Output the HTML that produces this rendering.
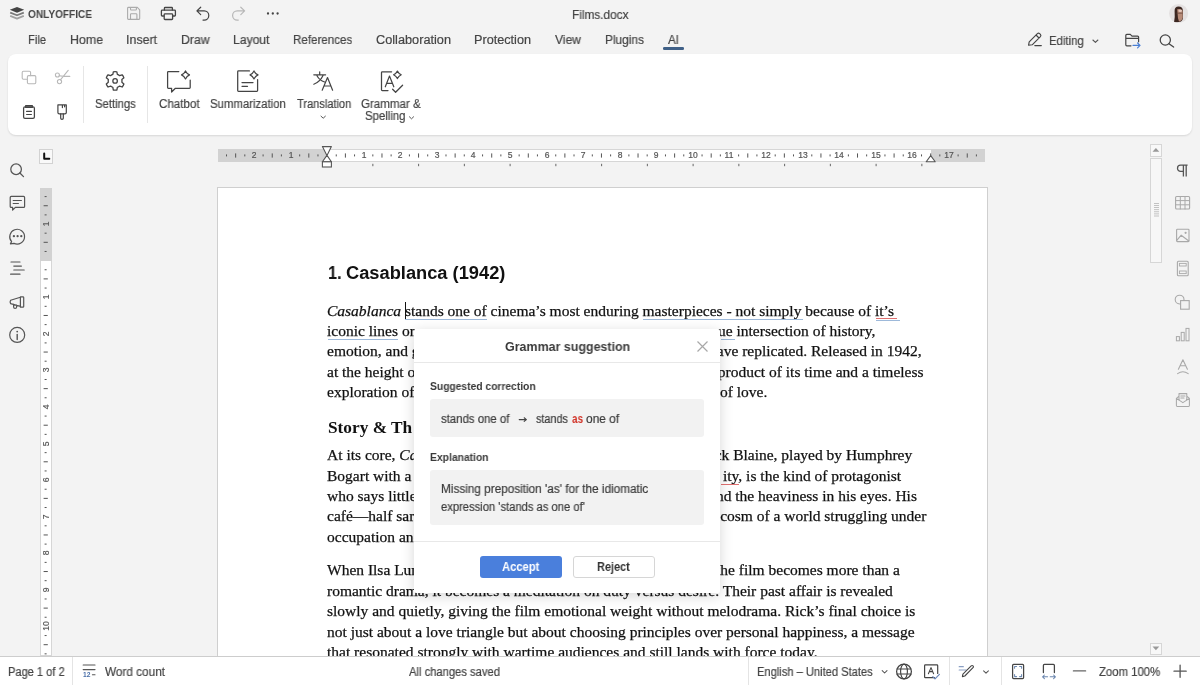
<!DOCTYPE html><html><head><meta charset="utf-8"><style>
html,body{margin:0;padding:0;}
body{width:1200px;height:685px;overflow:hidden;position:relative;background:#f3f3f3;font-family:"Liberation Sans",sans-serif;}
.t{position:absolute;white-space:pre;}
body{-webkit-font-smoothing:antialiased;}
.t{will-change:transform;}
.t.s{-webkit-text-stroke:0.2px currentColor;}
.a{position:absolute;}

.panel{position:absolute;left:8px;top:54px;width:1184px;height:81px;background:#fff;border-radius:8px;box-shadow:0 1px 2px rgba(0,0,0,.12);}
.page{position:absolute;left:217px;top:187px;width:769px;height:520px;background:#fff;border:1px solid #cfcfcf;}
.status{position:absolute;left:0;top:656px;width:1200px;height:29px;background:#fff;border-top:1px solid #cdcdcd;}
.dlg{position:absolute;left:414px;top:329.3px;width:306px;height:264.2px;background:#fff;border-radius:2px;box-shadow:0 3px 14px rgba(0,0,0,.16);}
</style></head><body>
<div class="t" id="t0" style="left:28.00px;transform-origin:0 0;top:8.61px;font-family:'Liberation Sans', sans-serif;font-size:10.5px;line-height:10.5px;font-weight:700;font-style:normal;color:#444;transform:scaleX(0.9595);">ONLYOFFICE</div>
<div class="t s" id="t1" style="left:571.80px;transform-origin:0 0;top:8.62px;font-family:'Liberation Sans', sans-serif;font-size:12.5px;line-height:12.5px;font-weight:400;font-style:normal;color:#444;transform:scaleX(0.9459);">Films.docx</div>
<div class="t s" id="t2" style="left:27.50px;transform-origin:0 0;top:33.92px;font-family:'Liberation Sans', sans-serif;font-size:12.5px;line-height:12.5px;font-weight:400;font-style:normal;color:#444;transform:scaleX(0.8930);">File</div>
<div class="t s" id="t3" style="left:69.50px;transform-origin:0 0;top:33.92px;font-family:'Liberation Sans', sans-serif;font-size:12.5px;line-height:12.5px;font-weight:400;font-style:normal;color:#444;transform:scaleX(0.9897);">Home</div>
<div class="t s" id="t4" style="left:126.00px;transform-origin:0 0;top:33.92px;font-family:'Liberation Sans', sans-serif;font-size:12.5px;line-height:12.5px;font-weight:400;font-style:normal;color:#444;transform:scaleX(0.9915);">Insert</div>
<div class="t s" id="t5" style="left:180.50px;transform-origin:0 0;top:33.92px;font-family:'Liberation Sans', sans-serif;font-size:12.5px;line-height:12.5px;font-weight:400;font-style:normal;color:#444;transform:scaleX(0.9770);">Draw</div>
<div class="t s" id="t6" style="left:232.50px;transform-origin:0 0;top:33.92px;font-family:'Liberation Sans', sans-serif;font-size:12.5px;line-height:12.5px;font-weight:400;font-style:normal;color:#444;transform:scaleX(0.9725);">Layout</div>
<div class="t s" id="t7" style="left:293.30px;transform-origin:0 0;top:33.92px;font-family:'Liberation Sans', sans-serif;font-size:12.5px;line-height:12.5px;font-weight:400;font-style:normal;color:#444;transform:scaleX(0.9259);">References</div>
<div class="t s" id="t8" style="left:376.00px;transform-origin:0 0;top:33.92px;font-family:'Liberation Sans', sans-serif;font-size:12.5px;line-height:12.5px;font-weight:400;font-style:normal;color:#444;transform:scaleX(1.0180);">Collaboration</div>
<div class="t s" id="t9" style="left:474.00px;transform-origin:0 0;top:33.92px;font-family:'Liberation Sans', sans-serif;font-size:12.5px;line-height:12.5px;font-weight:400;font-style:normal;color:#444;transform:scaleX(1.0128);">Protection</div>
<div class="t s" id="t10" style="left:555.00px;transform-origin:0 0;top:33.92px;font-family:'Liberation Sans', sans-serif;font-size:12.5px;line-height:12.5px;font-weight:400;font-style:normal;color:#444;transform:scaleX(0.9674);">View</div>
<div class="t s" id="t11" style="left:605.00px;transform-origin:0 0;top:33.92px;font-family:'Liberation Sans', sans-serif;font-size:12.5px;line-height:12.5px;font-weight:400;font-style:normal;color:#444;transform:scaleX(0.9512);">Plugins</div>
<div class="t s" id="t12" style="left:668.00px;transform-origin:0 0;top:33.92px;font-family:'Liberation Sans', sans-serif;font-size:12.5px;line-height:12.5px;font-weight:400;font-style:normal;color:#444;transform:scaleX(0.9312);">AI</div>
<div class="a" style="left:663px;top:47.3px;width:21px;height:2.7px;background:#3f6087;border-radius:1.3px"></div>
<div class="t s" id="t13" style="left:1048.80px;transform-origin:0 0;top:35.32px;font-family:'Liberation Sans', sans-serif;font-size:12.5px;line-height:12.5px;font-weight:400;font-style:normal;color:#444;transform:scaleX(0.9102);">Editing</div>
<svg class="a" style="left:0;top:0;pointer-events:none" width="1200" height="685" viewBox="0 0 1200 685" fill="none"><path d="M17 6.9 L24.2 9.8 L17 12.7 L9.8 9.8Z" fill="#444"/><path d="M10.2 12.6 L17 15.3 L23.8 12.6" stroke="#7a7a7a" stroke-width="1.7" stroke-linejoin="round"/><path d="M10.2 15.9 L17 18.6 L23.8 15.9" stroke="#a0a0a0" stroke-width="1.7" stroke-linejoin="round"/><path d="M127.6 8.2 Q127.6 7.4 128.4 7.4 H137.3 L139.7 9.8 V18.6 Q139.7 19.4 138.9 19.4 H128.4 Q127.6 19.4 127.6 18.6Z" stroke="#ababab" stroke-width="1.1" stroke-linecap="round" stroke-linejoin="round" /><path d="M130.5 7.6 V9.2 Q130.5 10 131.3 10 H135.6 Q136.4 10 136.4 9.2 V7.6" stroke="#ababab" stroke-width="1.1" stroke-linecap="round" stroke-linejoin="round" /><path d="M130.5 19.2 V14.6 Q130.5 13.8 131.3 13.8 H136.1 Q136.9 13.8 136.9 14.6 V19.2" stroke="#ababab" stroke-width="1.1" stroke-linecap="round" stroke-linejoin="round" /><path d="M164.4 10 V8.2 Q164.4 7.5 165.1 7.5 H171.7 Q172.4 7.5 172.4 8.2 V10" stroke="#444" stroke-width="1.3" stroke-linecap="round" stroke-linejoin="round" /><path d="M163.8 16 H162.2 Q161.4 16 161.4 15.2 V11 Q161.4 10.2 162.2 10.2 H174.6 Q175.4 10.2 175.4 11 V15.2 Q175.4 16 174.6 16 H173" stroke="#444" stroke-width="1.3" stroke-linecap="round" stroke-linejoin="round" /><path d="M164.2 14.6 Q164.2 13.8 165 13.8 H171.8 Q172.6 13.8 172.6 14.6 V18.7 Q172.6 19.5 171.8 19.5 H165 Q164.2 19.5 164.2 18.7Z" stroke="#444" stroke-width="1.3" stroke-linecap="round" stroke-linejoin="round" /><path d="M200.7 7.2 L196.9 10.9 L200.7 14.7 M197.2 10.9 H204.2 A4.6 4.6 0 0 1 204.2 20.1 H203" stroke="#444" stroke-width="1.2" stroke-linecap="round" stroke-linejoin="round" /><path d="M240.8 7.2 L244.6 10.9 L240.8 14.7 M244.3 10.9 H237.2 A4.6 4.6 0 0 0 237.2 20.1 H238.3" stroke="#b8b8b8" stroke-width="1.2" stroke-linecap="round" stroke-linejoin="round" /><circle cx="268" cy="13.5" r="1.15" fill="#444"/><circle cx="272.8" cy="13.5" r="1.15" fill="#444"/><circle cx="277.6" cy="13.5" r="1.15" fill="#444"/><defs><radialGradient id="av" cx="50%" cy="45%" r="55%"><stop offset="0" stop-color="#8a6a5a"/><stop offset="0.5" stop-color="#4a342c"/><stop offset="1" stop-color="#d8d4d2"/></radialGradient><clipPath id="avc"><circle cx="1178.5" cy="13.5" r="9.5"/></clipPath></defs><circle cx="1178.6" cy="13.5" r="9.5" fill="#e4e1e1"/><g clip-path="url(#avc)"><path d="M1174.6 11 Q1174.4 6.6 1178.6 6.5 Q1182.6 6.6 1182.9 10.5 L1183 18 Q1182.4 21.8 1178.6 22 L1174 22.5 Q1175.2 18 1174.6 11Z" fill="#3b2620"/><path d="M1177.2 9.2 Q1180.6 8.4 1182.6 10.6 L1182.8 17.6 Q1182 21.2 1179 21.4 Q1177.6 18 1177.6 14Z" fill="#b78b78"/><ellipse cx="1180.2" cy="10.8" rx="1.8" ry="1.3" fill="#e6c9bd"/><path d="M1176.6 13.2 H1182.6" stroke="#6b4a3e" stroke-width="0.8"/></g><path d="M1028.6 45.2 L1029.2 41.8 L1037.4 33.6 Q1038.5 32.6 1039.6 33.6 L1040.4 34.4 Q1041.4 35.5 1040.4 36.6 L1032.2 44.8 Z M1036 35 L1039 38" stroke="#444" stroke-width="1.15" stroke-linecap="round" stroke-linejoin="round" /><path d="M1034.8 45.6 H1041.3" stroke="#444" stroke-width="1.15" stroke-linecap="round" stroke-linejoin="round" /><path d="M1092.9 40 L1095.4 42.3 L1097.9 40" stroke="#555" stroke-width="1.1" stroke-linecap="round" stroke-linejoin="round" /><path d="M1131 45.8 H1126.8 Q1125.8 45.8 1125.8 44.8 V35.4 Q1125.8 34.4 1126.8 34.4 H1130.3 L1132 36.1 H1137.6 Q1138.6 36.1 1138.6 37.1 V41.8 M1125.8 38.4 H1138.6" stroke="#444" stroke-width="1.2" stroke-linecap="round" stroke-linejoin="round" /><path d="M1133 45.4 H1140 M1137.6 43 L1140 45.4 L1137.6 47.8" stroke="#4a7fd4" stroke-width="1.2" stroke-linecap="round" stroke-linejoin="round" /><circle cx="1165.3" cy="40" r="5.1" stroke="#444" stroke-width="1.25"/><path d="M1169 43.7 L1173.6 47.1" stroke="#444" stroke-width="1.3" stroke-linecap="round" stroke-linejoin="round" /></svg>
<div class="panel"></div>
<div class="a" style="left:83px;top:66px;width:1px;height:57px;background:#e6e6e6"></div>
<div class="a" style="left:147px;top:66px;width:1px;height:57px;background:#e6e6e6"></div>
<div class="t s" id="t14" style="left:95.20px;transform-origin:0 0;top:98.04px;font-family:'Liberation Sans', sans-serif;font-size:12px;line-height:12px;font-weight:400;font-style:normal;color:#444;transform:scaleX(0.9410);">Settings</div>
<div class="t s" id="t15" style="left:158.90px;transform-origin:0 0;top:98.04px;font-family:'Liberation Sans', sans-serif;font-size:12px;line-height:12px;font-weight:400;font-style:normal;color:#444;transform:scaleX(0.9659);">Chatbot</div>
<div class="t s" id="t16" style="left:210.00px;transform-origin:0 0;top:98.04px;font-family:'Liberation Sans', sans-serif;font-size:12px;line-height:12px;font-weight:400;font-style:normal;color:#444;transform:scaleX(0.9471);">Summarization</div>
<div class="t s" id="t17" style="left:296.50px;transform-origin:0 0;top:98.04px;font-family:'Liberation Sans', sans-serif;font-size:12px;line-height:12px;font-weight:400;font-style:normal;color:#444;transform:scaleX(0.9199);">Translation</div>
<div class="t s" id="t18" style="left:361.00px;transform-origin:0 0;top:98.04px;font-family:'Liberation Sans', sans-serif;font-size:12px;line-height:12px;font-weight:400;font-style:normal;color:#444;transform:scaleX(0.9627);">Grammar &amp;</div>
<div class="t s" id="t19" style="left:365.00px;transform-origin:0 0;top:110.04px;font-family:'Liberation Sans', sans-serif;font-size:12px;line-height:12px;font-weight:400;font-style:normal;color:#444;transform:scaleX(0.9484);">Spelling</div>
<svg class="a" style="left:0;top:0;pointer-events:none" width="1200" height="685" viewBox="0 0 1200 685" fill="none"><path d="M26.6 79.2 H23.4 Q22.2 79.2 22.2 78 V72.4 Q22.2 71.2 23.4 71.2 H29.4 Q30.6 71.2 30.6 72.4 V75.6" stroke="#b8b8b8" stroke-width="1.1" stroke-linecap="round" stroke-linejoin="round" /><path d="M28.6 75.6 H34.6 Q35.8 75.6 35.8 76.8 V82.6 Q35.8 83.8 34.6 83.8 H28.6 Q27.4 83.8 27.4 82.6 V76.8 Q27.4 75.6 28.6 75.6Z" stroke="#b8b8b8" stroke-width="1.1" stroke-linecap="round" stroke-linejoin="round" /><circle cx="57.4" cy="75" r="2" stroke="#b8b8b8" stroke-width="1.1"/><circle cx="59.5" cy="81.6" r="2.1" stroke="#b8b8b8" stroke-width="1.1"/><path d="M60.4 79.8 L68.2 70.4 M59.3 75.8 L63.8 76.4 H69.8" stroke="#b8b8b8" stroke-width="1.1" stroke-linecap="round" stroke-linejoin="round" /><path d="M25 106.8 H33 Q34.4 106.8 34.4 108.2 V117 Q34.4 118.4 33 118.4 H25 Q23.6 118.4 23.6 117 V108.2 Q23.6 106.8 25 106.8Z" stroke="#444" stroke-width="1.25" stroke-linecap="round" stroke-linejoin="round" /><path d="M25.6 105.6 H32.4 V107.4 H25.6Z" stroke="#444" stroke-width="1.1" stroke-linecap="round" stroke-linejoin="round" /><path d="M26.6 111.4 H31.4 M26.6 114.5 H31.4" stroke="#444" stroke-width="1.2" stroke-linecap="round" stroke-linejoin="round" /><path d="M57.9 104.9 H66.3 V112.4 Q66.3 113.8 64.9 113.8 H59.3 Q57.9 113.8 57.9 112.4Z M62.4 105 V107.6 M64.6 105 V106.8" stroke="#444" stroke-width="1.2" stroke-linecap="round" stroke-linejoin="round" /><path d="M60.7 113.9 V118.3 Q60.7 119.3 62 119.3 Q63.3 119.3 63.3 118.3 V113.9" stroke="#444" stroke-width="1.2" stroke-linecap="round" stroke-linejoin="round" /><path d="M112.85 74.38 L113.33 71.77 A9.3 9.3 0 0 1 116.87 71.77 L117.35 74.38 A6.9 6.9 0 0 1 119.63 75.69 A6.9 6.9 0 0 1 119.63 75.69 L122.12 74.80 A9.3 9.3 0 0 1 123.89 77.87 L121.87 79.58 A6.9 6.9 0 0 1 121.87 82.22 A6.9 6.9 0 0 1 121.87 82.22 L123.89 83.93 A9.3 9.3 0 0 1 122.12 87.00 L119.63 86.11 A6.9 6.9 0 0 1 117.35 87.42 A6.9 6.9 0 0 1 117.35 87.42 L116.87 90.03 A9.3 9.3 0 0 1 113.33 90.03 L112.85 87.42 A6.9 6.9 0 0 1 110.57 86.11 A6.9 6.9 0 0 1 110.57 86.11 L108.08 87.00 A9.3 9.3 0 0 1 106.31 83.93 L108.33 82.22 A6.9 6.9 0 0 1 108.33 79.58 A6.9 6.9 0 0 1 108.33 79.58 L106.31 77.87 A9.3 9.3 0 0 1 108.08 74.80 L110.57 75.69 A6.9 6.9 0 0 1 112.85 74.38 Z" stroke="#444" stroke-width="1.3" stroke-linecap="round" stroke-linejoin="round" /><circle cx="115.1" cy="80.9" r="2.25" stroke="#444" stroke-width="1.3"/><path d="M178.8 71.5 H168.4 Q167.6 71.5 167.6 72.3 V87.5 Q167.6 88.3 168.4 88.3 H171.6 V92 L175.4 88.3 H189.4 Q190.2 88.3 190.2 87.5 V80" stroke="#444" stroke-width="1.25" stroke-linecap="round" stroke-linejoin="round" /><path d="M185.5 70.9 Q186.78 73.62 189.5 74.9 Q186.78 76.18 185.5 78.9 Q184.22 76.18 181.5 74.9 Q184.22 73.62 185.5 70.9Z" stroke="#444" stroke-width="1.2" stroke-linecap="round" stroke-linejoin="round" /><path d="M249.4 70.9 H238.5 Q237.7 70.9 237.7 71.7 V90.5 Q237.7 91.3 238.5 91.3 H256.8 Q257.6 91.3 257.6 90.5 V79.6" stroke="#444" stroke-width="1.25" stroke-linecap="round" stroke-linejoin="round" /><path d="M242 82.5 H253 M242 86.3 H247.5" stroke="#444" stroke-width="1.25" stroke-linecap="round" stroke-linejoin="round" /><path d="M254 70.9 Q255.28 73.62 258.0 74.9 Q255.28 76.18 254 78.9 Q252.72 76.18 250.0 74.9 Q252.72 73.62 254 70.9Z" stroke="#444" stroke-width="1.2" stroke-linecap="round" stroke-linejoin="round" /><path d="M313.8 74.8 H325.6 M319.7 71.8 V74.6 M317 75.8 Q319.5 80.5 324.6 82 M323 75.5 Q320.2 81.8 313.8 84.2" stroke="#444" stroke-width="1.2" stroke-linecap="round" stroke-linejoin="round" /><path d="M322.2 90.2 L327.5 77.6 L332.6 90.2 M324 86 H330.8" stroke="#444" stroke-width="1.2" stroke-linecap="round" stroke-linejoin="round" /><path d="M391.6 71.8 H382.3 Q381.5 71.8 381.5 72.6 V89.8 Q381.5 90.6 382.3 90.6 H388" stroke="#444" stroke-width="1.25" stroke-linecap="round" stroke-linejoin="round" /><path d="M385.3 86.8 L389.5 76 L393.8 86.8 M386.6 83.4 H392.4" stroke="#444" stroke-width="1.2" stroke-linecap="round" stroke-linejoin="round" /><path d="M392.6 89.2 L395.6 92.3 L402.6 85.2" stroke="#444" stroke-width="1.25" stroke-linecap="round" stroke-linejoin="round" /><path d="M397.4 71.0 Q398.616 73.584 401.2 74.8 Q398.616 76.01599999999999 397.4 78.6 Q396.18399999999997 76.01599999999999 393.59999999999997 74.8 Q396.18399999999997 73.584 397.4 71.0Z" stroke="#444" stroke-width="1.2" stroke-linecap="round" stroke-linejoin="round" /><path d="M321 116.2 L323.2 118.2 L325.4 116.2" stroke="#555" stroke-width="1.0" stroke-linecap="round" stroke-linejoin="round" /><path d="M409.4 116.8 L411.5 118.8 L413.6 116.8" stroke="#555" stroke-width="1.0" stroke-linecap="round" stroke-linejoin="round" /></svg>
<div class="a" style="left:218px;top:149px;width:767px;height:13px;background:#fff;box-shadow:inset 0 0 0 1px #d6d6d6"></div>
<div class="a" style="left:218px;top:149px;width:109px;height:13px;background:#d2d2d2;"></div>
<div class="a" style="left:930.7px;top:149px;width:54.3px;height:13px;background:#d2d2d2;"></div>
<div class="a" style="left:40px;top:188px;width:11.5px;height:468px;background:#fff;box-shadow:inset 0 0 0 1px #d6d6d6"></div>
<div class="a" style="left:40px;top:188px;width:11.5px;height:72.6px;background:#d2d2d2;"></div>
<div class="a" style="left:39px;top:149px;width:14px;height:14.5px;background:#f9f9f9;border:1px solid #d2d2d2;box-sizing:border-box"></div>
<svg class="a" style="left:0;top:0;pointer-events:none" width="1200" height="685" viewBox="0 0 1200 685" fill="none"><path d="M44.2 153.6 V158.7 H49.3" stroke="#111" stroke-width="2.0" stroke-linecap="round" stroke-linejoin="round" stroke-linecap="butt" stroke-linejoin="miter"/></svg>
<svg class="a" style="left:0;top:0;pointer-events:none" width="1200" height="685" viewBox="0 0 1200 685" fill="none"><rect x="226.01" y="154.4" width="1" height="2" fill="#555"/><rect x="235.15" y="153.4" width="1" height="4.2" fill="#555"/><rect x="244.30" y="154.4" width="1" height="2" fill="#555"/><rect x="262.59" y="154.4" width="1" height="2" fill="#555"/><rect x="271.73" y="153.4" width="1" height="4.2" fill="#555"/><rect x="280.88" y="154.4" width="1" height="2" fill="#555"/><rect x="299.17" y="154.4" width="1" height="2" fill="#555"/><rect x="308.31" y="153.4" width="1" height="4.2" fill="#555"/><rect x="317.46" y="154.4" width="1" height="2" fill="#555"/><rect x="335.75" y="154.4" width="1" height="2" fill="#555"/><rect x="344.89" y="153.4" width="1" height="4.2" fill="#555"/><rect x="354.04" y="154.4" width="1" height="2" fill="#555"/><rect x="372.33" y="154.4" width="1" height="2" fill="#555"/><rect x="381.47" y="153.4" width="1" height="4.2" fill="#555"/><rect x="390.62" y="154.4" width="1" height="2" fill="#555"/><rect x="408.91" y="154.4" width="1" height="2" fill="#555"/><rect x="418.05" y="153.4" width="1" height="4.2" fill="#555"/><rect x="427.20" y="154.4" width="1" height="2" fill="#555"/><rect x="445.49" y="154.4" width="1" height="2" fill="#555"/><rect x="454.63" y="153.4" width="1" height="4.2" fill="#555"/><rect x="463.77" y="154.4" width="1" height="2" fill="#555"/><rect x="482.07" y="154.4" width="1" height="2" fill="#555"/><rect x="491.21" y="153.4" width="1" height="4.2" fill="#555"/><rect x="500.36" y="154.4" width="1" height="2" fill="#555"/><rect x="518.64" y="154.4" width="1" height="2" fill="#555"/><rect x="527.79" y="153.4" width="1" height="4.2" fill="#555"/><rect x="536.93" y="154.4" width="1" height="2" fill="#555"/><rect x="555.23" y="154.4" width="1" height="2" fill="#555"/><rect x="564.37" y="153.4" width="1" height="4.2" fill="#555"/><rect x="573.51" y="154.4" width="1" height="2" fill="#555"/><rect x="591.81" y="154.4" width="1" height="2" fill="#555"/><rect x="600.95" y="153.4" width="1" height="4.2" fill="#555"/><rect x="610.10" y="154.4" width="1" height="2" fill="#555"/><rect x="628.38" y="154.4" width="1" height="2" fill="#555"/><rect x="637.53" y="153.4" width="1" height="4.2" fill="#555"/><rect x="646.67" y="154.4" width="1" height="2" fill="#555"/><rect x="664.97" y="154.4" width="1" height="2" fill="#555"/><rect x="674.11" y="153.4" width="1" height="4.2" fill="#555"/><rect x="683.25" y="154.4" width="1" height="2" fill="#555"/><rect x="701.55" y="154.4" width="1" height="2" fill="#555"/><rect x="710.69" y="153.4" width="1" height="4.2" fill="#555"/><rect x="719.84" y="154.4" width="1" height="2" fill="#555"/><rect x="738.12" y="154.4" width="1" height="2" fill="#555"/><rect x="747.27" y="153.4" width="1" height="4.2" fill="#555"/><rect x="756.41" y="154.4" width="1" height="2" fill="#555"/><rect x="774.70" y="154.4" width="1" height="2" fill="#555"/><rect x="783.85" y="153.4" width="1" height="4.2" fill="#555"/><rect x="793.00" y="154.4" width="1" height="2" fill="#555"/><rect x="811.29" y="154.4" width="1" height="2" fill="#555"/><rect x="820.43" y="153.4" width="1" height="4.2" fill="#555"/><rect x="829.58" y="154.4" width="1" height="2" fill="#555"/><rect x="847.87" y="154.4" width="1" height="2" fill="#555"/><rect x="857.01" y="153.4" width="1" height="4.2" fill="#555"/><rect x="866.15" y="154.4" width="1" height="2" fill="#555"/><rect x="884.45" y="154.4" width="1" height="2" fill="#555"/><rect x="893.59" y="153.4" width="1" height="4.2" fill="#555"/><rect x="902.74" y="154.4" width="1" height="2" fill="#555"/><rect x="921.02" y="154.4" width="1" height="2" fill="#555"/><rect x="930.17" y="153.4" width="1" height="4.2" fill="#555"/><rect x="939.31" y="154.4" width="1" height="2" fill="#555"/><rect x="957.61" y="154.4" width="1" height="2" fill="#555"/><rect x="966.75" y="153.4" width="1" height="4.2" fill="#555"/><rect x="975.89" y="154.4" width="1" height="2" fill="#555"/><rect x="372.35" y="163.8" width="1" height="2.4" fill="#666"/><rect x="418.10" y="163.8" width="1" height="2.4" fill="#666"/><rect x="463.85" y="163.8" width="1" height="2.4" fill="#666"/><rect x="509.60" y="163.8" width="1" height="2.4" fill="#666"/><rect x="555.35" y="163.8" width="1" height="2.4" fill="#666"/><rect x="601.10" y="163.8" width="1" height="2.4" fill="#666"/><rect x="646.85" y="163.8" width="1" height="2.4" fill="#666"/><rect x="692.60" y="163.8" width="1" height="2.4" fill="#666"/><rect x="738.35" y="163.8" width="1" height="2.4" fill="#666"/><rect x="784.10" y="163.8" width="1" height="2.4" fill="#666"/><rect x="829.85" y="163.8" width="1" height="2.4" fill="#666"/><rect x="875.60" y="163.8" width="1" height="2.4" fill="#666"/><rect x="921.35" y="163.8" width="1" height="2.4" fill="#666"/><rect x="44.6" y="196.09" width="2" height="1" fill="#555"/><rect x="43.6" y="205.23" width="4.2" height="1" fill="#555"/><rect x="44.6" y="214.38" width="2" height="1" fill="#555"/><rect x="44.6" y="232.67" width="2" height="1" fill="#555"/><rect x="43.6" y="241.81" width="4.2" height="1" fill="#555"/><rect x="44.6" y="250.96" width="2" height="1" fill="#555"/><rect x="44.6" y="269.25" width="2" height="1" fill="#555"/><rect x="43.6" y="278.39" width="4.2" height="1" fill="#555"/><rect x="44.6" y="287.54" width="2" height="1" fill="#555"/><rect x="44.6" y="305.83" width="2" height="1" fill="#555"/><rect x="43.6" y="314.97" width="4.2" height="1" fill="#555"/><rect x="44.6" y="324.12" width="2" height="1" fill="#555"/><rect x="44.6" y="342.41" width="2" height="1" fill="#555"/><rect x="43.6" y="351.55" width="4.2" height="1" fill="#555"/><rect x="44.6" y="360.70" width="2" height="1" fill="#555"/><rect x="44.6" y="378.99" width="2" height="1" fill="#555"/><rect x="43.6" y="388.13" width="4.2" height="1" fill="#555"/><rect x="44.6" y="397.27" width="2" height="1" fill="#555"/><rect x="44.6" y="415.57" width="2" height="1" fill="#555"/><rect x="43.6" y="424.71" width="4.2" height="1" fill="#555"/><rect x="44.6" y="433.86" width="2" height="1" fill="#555"/><rect x="44.6" y="452.14" width="2" height="1" fill="#555"/><rect x="43.6" y="461.29" width="4.2" height="1" fill="#555"/><rect x="44.6" y="470.44" width="2" height="1" fill="#555"/><rect x="44.6" y="488.73" width="2" height="1" fill="#555"/><rect x="43.6" y="497.87" width="4.2" height="1" fill="#555"/><rect x="44.6" y="507.01" width="2" height="1" fill="#555"/><rect x="44.6" y="525.31" width="2" height="1" fill="#555"/><rect x="43.6" y="534.45" width="4.2" height="1" fill="#555"/><rect x="44.6" y="543.60" width="2" height="1" fill="#555"/><rect x="44.6" y="561.88" width="2" height="1" fill="#555"/><rect x="43.6" y="571.03" width="4.2" height="1" fill="#555"/><rect x="44.6" y="580.17" width="2" height="1" fill="#555"/><rect x="44.6" y="598.47" width="2" height="1" fill="#555"/><rect x="43.6" y="607.61" width="4.2" height="1" fill="#555"/><rect x="44.6" y="616.75" width="2" height="1" fill="#555"/><rect x="44.6" y="635.05" width="2" height="1" fill="#555"/><rect x="43.6" y="644.19" width="4.2" height="1" fill="#555"/><rect x="44.6" y="653.34" width="2" height="1" fill="#555"/><path d="M322.4 146.6 H331.4 L327 155.4 L331.4 161.8 H322.4 L326.9 155.4Z" stroke="#555" stroke-width="1.1" stroke-linecap="round" stroke-linejoin="round" fill="#fff"/><rect x="322.4" y="161.8" width="9" height="5.2" fill="#fff" stroke="#555" stroke-width="1.1"/><path d="M930.7 155.6 L935.2 161.8 H926.2Z" stroke="#555" stroke-width="1.1" stroke-linecap="round" stroke-linejoin="round" fill="#fff"/></svg>
<div class="t s" id="t20" style="left:253.94px;transform-origin:0 0;top:151.20px;font-family:'Liberation Sans', sans-serif;font-size:8.5px;line-height:8.5px;font-weight:400;font-style:normal;color:#555;transform:translateX(-50%);">2</div>
<div class="t s" id="t21" style="left:290.52px;transform-origin:0 0;top:151.20px;font-family:'Liberation Sans', sans-serif;font-size:8.5px;line-height:8.5px;font-weight:400;font-style:normal;color:#555;transform:translateX(-50%);">1</div>
<div class="t s" id="t22" style="left:363.68px;transform-origin:0 0;top:151.20px;font-family:'Liberation Sans', sans-serif;font-size:8.5px;line-height:8.5px;font-weight:400;font-style:normal;color:#555;transform:translateX(-50%);">1</div>
<div class="t s" id="t23" style="left:400.26px;transform-origin:0 0;top:151.20px;font-family:'Liberation Sans', sans-serif;font-size:8.5px;line-height:8.5px;font-weight:400;font-style:normal;color:#555;transform:translateX(-50%);">2</div>
<div class="t s" id="t24" style="left:436.84px;transform-origin:0 0;top:151.20px;font-family:'Liberation Sans', sans-serif;font-size:8.5px;line-height:8.5px;font-weight:400;font-style:normal;color:#555;transform:translateX(-50%);">3</div>
<div class="t s" id="t25" style="left:473.42px;transform-origin:0 0;top:151.20px;font-family:'Liberation Sans', sans-serif;font-size:8.5px;line-height:8.5px;font-weight:400;font-style:normal;color:#555;transform:translateX(-50%);">4</div>
<div class="t s" id="t26" style="left:510.00px;transform-origin:0 0;top:151.20px;font-family:'Liberation Sans', sans-serif;font-size:8.5px;line-height:8.5px;font-weight:400;font-style:normal;color:#555;transform:translateX(-50%);">5</div>
<div class="t s" id="t27" style="left:546.58px;transform-origin:0 0;top:151.20px;font-family:'Liberation Sans', sans-serif;font-size:8.5px;line-height:8.5px;font-weight:400;font-style:normal;color:#555;transform:translateX(-50%);">6</div>
<div class="t s" id="t28" style="left:583.16px;transform-origin:0 0;top:151.20px;font-family:'Liberation Sans', sans-serif;font-size:8.5px;line-height:8.5px;font-weight:400;font-style:normal;color:#555;transform:translateX(-50%);">7</div>
<div class="t s" id="t29" style="left:619.74px;transform-origin:0 0;top:151.20px;font-family:'Liberation Sans', sans-serif;font-size:8.5px;line-height:8.5px;font-weight:400;font-style:normal;color:#555;transform:translateX(-50%);">8</div>
<div class="t s" id="t30" style="left:656.32px;transform-origin:0 0;top:151.20px;font-family:'Liberation Sans', sans-serif;font-size:8.5px;line-height:8.5px;font-weight:400;font-style:normal;color:#555;transform:translateX(-50%);">9</div>
<div class="t s" id="t31" style="left:692.90px;transform-origin:0 0;top:151.20px;font-family:'Liberation Sans', sans-serif;font-size:8.5px;line-height:8.5px;font-weight:400;font-style:normal;color:#555;transform:translateX(-50%);">10</div>
<div class="t s" id="t32" style="left:729.48px;transform-origin:0 0;top:151.20px;font-family:'Liberation Sans', sans-serif;font-size:8.5px;line-height:8.5px;font-weight:400;font-style:normal;color:#555;transform:translateX(-50%);">11</div>
<div class="t s" id="t33" style="left:766.06px;transform-origin:0 0;top:151.20px;font-family:'Liberation Sans', sans-serif;font-size:8.5px;line-height:8.5px;font-weight:400;font-style:normal;color:#555;transform:translateX(-50%);">12</div>
<div class="t s" id="t34" style="left:802.64px;transform-origin:0 0;top:151.20px;font-family:'Liberation Sans', sans-serif;font-size:8.5px;line-height:8.5px;font-weight:400;font-style:normal;color:#555;transform:translateX(-50%);">13</div>
<div class="t s" id="t35" style="left:839.22px;transform-origin:0 0;top:151.20px;font-family:'Liberation Sans', sans-serif;font-size:8.5px;line-height:8.5px;font-weight:400;font-style:normal;color:#555;transform:translateX(-50%);">14</div>
<div class="t s" id="t36" style="left:875.80px;transform-origin:0 0;top:151.20px;font-family:'Liberation Sans', sans-serif;font-size:8.5px;line-height:8.5px;font-weight:400;font-style:normal;color:#555;transform:translateX(-50%);">15</div>
<div class="t s" id="t37" style="left:912.38px;transform-origin:0 0;top:151.20px;font-family:'Liberation Sans', sans-serif;font-size:8.5px;line-height:8.5px;font-weight:400;font-style:normal;color:#555;transform:translateX(-50%);">16</div>
<div class="t s" id="t38" style="left:948.96px;transform-origin:0 0;top:151.20px;font-family:'Liberation Sans', sans-serif;font-size:8.5px;line-height:8.5px;font-weight:400;font-style:normal;color:#555;transform:translateX(-50%);">17</div>
<div class="t" style="left:41px;top:219.02px;width:10px;height:10px;font-size:8.5px;line-height:10px;text-align:center;color:#555;transform:rotate(-90deg);will-change:transform;-webkit-text-stroke:0.2px #555">1</div>
<div class="t" style="left:41px;top:292.18px;width:10px;height:10px;font-size:8.5px;line-height:10px;text-align:center;color:#555;transform:rotate(-90deg);will-change:transform;-webkit-text-stroke:0.2px #555">1</div>
<div class="t" style="left:41px;top:328.76px;width:10px;height:10px;font-size:8.5px;line-height:10px;text-align:center;color:#555;transform:rotate(-90deg);will-change:transform;-webkit-text-stroke:0.2px #555">2</div>
<div class="t" style="left:41px;top:365.34px;width:10px;height:10px;font-size:8.5px;line-height:10px;text-align:center;color:#555;transform:rotate(-90deg);will-change:transform;-webkit-text-stroke:0.2px #555">3</div>
<div class="t" style="left:41px;top:401.92px;width:10px;height:10px;font-size:8.5px;line-height:10px;text-align:center;color:#555;transform:rotate(-90deg);will-change:transform;-webkit-text-stroke:0.2px #555">4</div>
<div class="t" style="left:41px;top:438.50px;width:10px;height:10px;font-size:8.5px;line-height:10px;text-align:center;color:#555;transform:rotate(-90deg);will-change:transform;-webkit-text-stroke:0.2px #555">5</div>
<div class="t" style="left:41px;top:475.08px;width:10px;height:10px;font-size:8.5px;line-height:10px;text-align:center;color:#555;transform:rotate(-90deg);will-change:transform;-webkit-text-stroke:0.2px #555">6</div>
<div class="t" style="left:41px;top:511.66px;width:10px;height:10px;font-size:8.5px;line-height:10px;text-align:center;color:#555;transform:rotate(-90deg);will-change:transform;-webkit-text-stroke:0.2px #555">7</div>
<div class="t" style="left:41px;top:548.24px;width:10px;height:10px;font-size:8.5px;line-height:10px;text-align:center;color:#555;transform:rotate(-90deg);will-change:transform;-webkit-text-stroke:0.2px #555">8</div>
<div class="t" style="left:41px;top:584.82px;width:10px;height:10px;font-size:8.5px;line-height:10px;text-align:center;color:#555;transform:rotate(-90deg);will-change:transform;-webkit-text-stroke:0.2px #555">9</div>
<div class="t" style="left:41px;top:621.40px;width:10px;height:10px;font-size:8.5px;line-height:10px;text-align:center;color:#555;transform:rotate(-90deg);will-change:transform;-webkit-text-stroke:0.2px #555">10</div>
<svg class="a" style="left:0;top:0;pointer-events:none" width="1200" height="685" viewBox="0 0 1200 685" fill="none"><circle cx="16.1" cy="169.2" r="5.3" stroke="#555" stroke-width="1.25"/><path d="M19.9 173 L23.5 176.6" stroke="#555" stroke-width="1.3" stroke-linecap="round" stroke-linejoin="round" /><path d="M11.2 196.4 H23.6 Q24.6 196.4 24.6 197.4 V206.4 Q24.6 207.4 23.6 207.4 H15.4 L12.6 210 V207.4 H11.2 Q10.2 207.4 10.2 206.4 V197.4 Q10.2 196.4 11.2 196.4Z" stroke="#555" stroke-width="1.2" stroke-linecap="round" stroke-linejoin="round" /><path d="M13.2 200.5 H21.4 M13.2 203.5 H18.4" stroke="#555" stroke-width="1.2" stroke-linecap="round" stroke-linejoin="round" /><path d="M11.6 241.6 A7.4 7.4 0 1 1 14 243.4 L10.4 243.8 Z" stroke="#555" stroke-width="1.2" stroke-linecap="round" stroke-linejoin="round" /><circle cx="13.9" cy="236.2" r="1.15" fill="#555"/><circle cx="17.6" cy="236.2" r="1.15" fill="#555"/><circle cx="21.3" cy="236.2" r="1.15" fill="#555"/><path d="M11 262 H20 M13.8 266.1 H21.4 M13.8 270 H24.2 M10.6 274.2 H20" stroke="#555" stroke-width="1.2" stroke-linecap="round" stroke-linejoin="round" /><path d="M10.6 300.2 Q9.6 301.9 10.6 303.6 L20.4 306.4 V297.2 Z M20.4 296.8 H22.9 Q23.7 296.8 23.7 297.6 V306.4 Q23.7 307.2 22.9 307.2 H20.4 M13.6 304.4 V307.1 Q13.6 308.5 15.1 308.5 Q16.6 308.5 16.6 307.1 V305.2" stroke="#555" stroke-width="1.2" stroke-linecap="round" stroke-linejoin="round" /><circle cx="17.2" cy="334.9" r="7.5" stroke="#555" stroke-width="1.2"/><circle cx="17.2" cy="331.6" r="0.9" fill="#555"/><path d="M17.2 334.4 V339.6" stroke="#555" stroke-width="1.4" stroke-linecap="round" stroke-linejoin="round" /></svg>
<div class="a" style="left:1150px;top:144px;width:12px;height:13px;background:#f8f8f8;border:1px solid #d6d6d6;box-sizing:border-box"></div>
<div class="a" style="left:1150px;top:158px;width:12px;height:104.5px;background:#f7f7f7;border:1px solid #d6d6d6;box-sizing:border-box"></div>
<div class="a" style="left:1150px;top:642.5px;width:12px;height:12.5px;background:#f8f8f8;border:1px solid #d6d6d6;box-sizing:border-box"></div>
<svg class="a" style="left:0;top:0;pointer-events:none" width="1200" height="685" viewBox="0 0 1200 685" fill="none"><path d="M1152.5 151.8 L1155.9 148 L1159.3 151.8Z" fill="#999"/><path d="M1152.5 646.4 L1155.9 650.2 L1159.3 646.4Z" fill="#999"/><rect x="1154" y="203.0" width="5" height="0.8" fill="#b5b5b5"/><rect x="1154" y="205.1" width="5" height="0.8" fill="#b5b5b5"/><rect x="1154" y="207.2" width="5" height="0.8" fill="#b5b5b5"/><rect x="1154" y="209.3" width="5" height="0.8" fill="#b5b5b5"/><rect x="1154" y="211.4" width="5" height="0.8" fill="#b5b5b5"/><rect x="1154" y="213.5" width="5" height="0.8" fill="#b5b5b5"/><rect x="1154" y="215.6" width="5" height="0.8" fill="#b5b5b5"/><path d="M1183.4 165.2 V176.6 M1186.2 165.2 V176.6 M1187.6 165.2 H1180.6 A3.1 3.1 0 0 0 1180.6 171.4 H1183.4" stroke="#555" stroke-width="1.3"/><rect x="1175.6" y="196.5" width="14" height="12.5" rx="1" stroke="#a9a9a9" stroke-width="1.1"/><path d="M1175.6 200.6 H1189.6 M1175.6 204.8 H1189.6 M1180.3 196.5 V209 M1185 196.5 V209" stroke="#a9a9a9" stroke-width="1.0" stroke-linecap="round" stroke-linejoin="round" /><rect x="1176.6" y="229.2" width="12.4" height="12.4" rx="0.8" stroke="#a9a9a9" stroke-width="1.1"/><path d="M1176.8 240.4 L1181.2 235.2 L1188.8 241" stroke="#a9a9a9" stroke-width="1.1" stroke-linecap="round" stroke-linejoin="round" /><circle cx="1185.6" cy="232.8" r="1.1" fill="#a9a9a9"/><rect x="1177.4" y="261.2" width="10.8" height="14.6" rx="1" stroke="#a9a9a9" stroke-width="1.1"/><rect x="1179.4" y="263.4" width="6.8" height="2.6" stroke="#a9a9a9" stroke-width="0.9"/><rect x="1179.4" y="271" width="6.8" height="2.6" stroke="#a9a9a9" stroke-width="0.9"/><circle cx="1179.6" cy="299.6" r="4.4" stroke="#a9a9a9" stroke-width="1.1"/><rect x="1180.6" y="300.6" width="8.6" height="8.6" fill="#f3f3f3" stroke="#a9a9a9" stroke-width="1.1"/><rect x="1176.4" y="336.6" width="3" height="4.2" stroke="#a9a9a9" stroke-width="1"/><rect x="1181.2" y="332.4" width="3" height="8.4" stroke="#a9a9a9" stroke-width="1"/><rect x="1186" y="328.4" width="3" height="12.4" stroke="#a9a9a9" stroke-width="1"/><path d="M1178.4 369.2 L1182.9 359.8 L1187.4 369.2 M1180 365.8 H1185.8 M1177.6 373.6 Q1182.9 369.8 1188.2 373.6" stroke="#a9a9a9" stroke-width="1.1" stroke-linecap="round" stroke-linejoin="round" /><path d="M1176.4 398.4 V405.6 Q1176.4 406.4 1177.2 406.4 H1188.6 Q1189.4 406.4 1189.4 405.6 V398.4 L1182.9 402.6 Z M1176.4 398.4 L1179 396.2 M1189.4 398.4 L1186.8 396.2 M1179 400.2 V393.6 H1186.8 V400.2 M1180.8 396 H1185 M1180.8 398 H1184" stroke="#a9a9a9" stroke-width="1.05" stroke-linecap="round" stroke-linejoin="round" /></svg>
<div class="page"></div>
<div class="t" id="t39" style="left:328.30px;transform-origin:0 0;top:263.96px;font-family:'Liberation Sans', sans-serif;font-size:18px;line-height:18px;font-weight:700;font-style:normal;color:#111;transform:scaleX(0.9057);">1.</div>
<div class="t" id="t40" style="left:345.60px;transform-origin:0 0;top:263.96px;font-family:'Liberation Sans', sans-serif;font-size:18px;line-height:18px;font-weight:700;font-style:normal;color:#111;transform:scaleX(1.0147);">Casablanca (1942)</div>
<div class="t" id="t41" style="left:327.40px;transform-origin:0 0;top:302.92px;font-family:'Liberation Serif', serif;font-size:15.5px;line-height:15.5px;font-weight:400;font-style:normal;color:#111;-webkit-text-stroke:0.25px #111;"><i>Casablanca</i> stands one of cinema’s most enduring masterpieces - not simply because of it’s</div>
<div class="a" style="left:405px;top:319px;width:82px;height:1px;background:#9db9da"></div>
<div class="a" style="left:643px;top:319px;width:160px;height:1px;background:#9db9da"></div>
<div class="a" style="left:876px;top:320px;width:24px;height:1px;background:#9db9da"></div>
<div class="a" style="left:876px;top:318px;width:21px;height:1px;background:#e07070"></div>
<div class="a" style="left:404.5px;top:302px;width:1px;height:17px;background:#111"></div>
<div class="t" id="t42" style="left:327.10px;transform-origin:0 0;top:323.32px;font-family:'Liberation Serif', serif;font-size:15.5px;line-height:15.5px;font-weight:400;font-style:normal;color:#111;-webkit-text-stroke:0.25px #111;">iconic lines or</div>
<div class="a" style="left:327.5px;top:339px;width:70.5px;height:1px;background:#9db9da"></div>
<div class="t" id="t43" style="right:324.20px;transform-origin:100% 0;top:323.32px;font-family:'Liberation Serif', serif;font-size:15.5px;line-height:15.5px;font-weight:400;font-style:normal;color:#111;-webkit-text-stroke:0.25px #111;">ue intersection of history,</div>
<div class="a" style="left:721px;top:339px;width:13.5px;height:1px;background:#9db9da"></div>
<div class="t" id="t44" style="left:327.10px;transform-origin:0 0;top:343.42px;font-family:'Liberation Serif', serif;font-size:15.5px;line-height:15.5px;font-weight:400;font-style:normal;color:#111;-webkit-text-stroke:0.25px #111;">emotion, and gr</div>
<div class="t" id="t45" style="right:278.20px;transform-origin:100% 0;top:343.42px;font-family:'Liberation Serif', serif;font-size:15.5px;line-height:15.5px;font-weight:400;font-style:normal;color:#111;-webkit-text-stroke:0.25px #111;">have replicated. Released in 1942,</div>
<div class="t" id="t46" style="left:327.10px;transform-origin:0 0;top:363.62px;font-family:'Liberation Serif', serif;font-size:15.5px;line-height:15.5px;font-weight:400;font-style:normal;color:#111;-webkit-text-stroke:0.25px #111;">at the height of</div>
<div class="t" id="t47" style="right:276.30px;transform-origin:100% 0;top:363.62px;font-family:'Liberation Serif', serif;font-size:15.5px;line-height:15.5px;font-weight:400;font-style:normal;color:#111;-webkit-text-stroke:0.25px #111;">a product of its time and a timeless</div>
<div class="t" id="t48" style="left:327.10px;transform-origin:0 0;top:383.82px;font-family:'Liberation Serif', serif;font-size:15.5px;line-height:15.5px;font-weight:400;font-style:normal;color:#111;-webkit-text-stroke:0.25px #111;">exploration of</div>
<div class="t" id="t49" style="right:433.00px;transform-origin:100% 0;top:383.82px;font-family:'Liberation Serif', serif;font-size:15.5px;line-height:15.5px;font-weight:400;font-style:normal;color:#111;-webkit-text-stroke:0.25px #111;">of love.</div>
<div class="t" id="t50" style="left:327.70px;transform-origin:0 0;top:418.51px;font-family:'Liberation Serif', serif;font-size:17.3px;line-height:17.3px;font-weight:700;font-style:normal;color:#111;">Story &amp; Th</div>
<div class="t" id="t51" style="left:327.10px;transform-origin:0 0;top:447.42px;font-family:'Liberation Serif', serif;font-size:15.5px;line-height:15.5px;font-weight:400;font-style:normal;color:#111;-webkit-text-stroke:0.25px #111;">At its core, <i>Casablanca</i></div>
<div class="t" id="t52" style="right:287.80px;transform-origin:100% 0;top:447.42px;font-family:'Liberation Serif', serif;font-size:15.5px;line-height:15.5px;font-weight:400;font-style:normal;color:#111;-webkit-text-stroke:0.25px #111;">Rick Blaine, played by Humphrey</div>
<div class="t" id="t53" style="left:327.10px;transform-origin:0 0;top:467.82px;font-family:'Liberation Serif', serif;font-size:15.5px;line-height:15.5px;font-weight:400;font-style:normal;color:#111;-webkit-text-stroke:0.25px #111;">Bogart with a</div>
<div class="t" id="t54" style="right:299.30px;transform-origin:100% 0;top:467.82px;font-family:'Liberation Serif', serif;font-size:15.5px;line-height:15.5px;font-weight:400;font-style:normal;color:#111;-webkit-text-stroke:0.25px #111;">ity, is the kind of protagonist</div>
<div class="a" style="left:721px;top:484px;width:18px;height:1px;background:#e07070"></div>
<div class="t" id="t55" style="left:327.10px;transform-origin:0 0;top:488.02px;font-family:'Liberation Serif', serif;font-size:15.5px;line-height:15.5px;font-weight:400;font-style:normal;color:#111;-webkit-text-stroke:0.25px #111;">who says little</div>
<div class="t" id="t56" style="right:283.00px;transform-origin:100% 0;top:488.02px;font-family:'Liberation Serif', serif;font-size:15.5px;line-height:15.5px;font-weight:400;font-style:normal;color:#111;-webkit-text-stroke:0.25px #111;">and the heaviness in his eyes. His</div>
<div class="t" id="t57" style="left:327.10px;transform-origin:0 0;top:508.42px;font-family:'Liberation Serif', serif;font-size:15.5px;line-height:15.5px;font-weight:400;font-style:normal;color:#111;-webkit-text-stroke:0.25px #111;">café—half sardonic</div>
<div class="t" id="t58" style="right:273.40px;transform-origin:100% 0;top:508.42px;font-family:'Liberation Serif', serif;font-size:15.5px;line-height:15.5px;font-weight:400;font-style:normal;color:#111;-webkit-text-stroke:0.25px #111;">microcosm of a world struggling under</div>
<div class="t" id="t59" style="left:327.10px;transform-origin:0 0;top:529.22px;font-family:'Liberation Serif', serif;font-size:15.5px;line-height:15.5px;font-weight:400;font-style:normal;color:#111;-webkit-text-stroke:0.25px #111;">occupation and</div>
<div class="t" id="t60" style="left:327.10px;transform-origin:0 0;top:562.42px;font-family:'Liberation Serif', serif;font-size:15.5px;line-height:15.5px;font-weight:400;font-style:normal;color:#111;-webkit-text-stroke:0.25px #111;">When Ilsa Lund</div>
<div class="t" id="t61" style="right:299.90px;transform-origin:100% 0;top:562.42px;font-family:'Liberation Serif', serif;font-size:15.5px;line-height:15.5px;font-weight:400;font-style:normal;color:#111;-webkit-text-stroke:0.25px #111;">the film becomes more than a</div>
<div class="t" id="t62" style="left:327.10px;transform-origin:0 0;top:582.82px;font-family:'Liberation Serif', serif;font-size:15.5px;line-height:15.5px;font-weight:400;font-style:normal;color:#111;-webkit-text-stroke:0.25px #111;">romantic drama, it becomes a meditation on duty versus desire. Their past affair is revealed</div>
<div class="t" id="t63" style="left:327.10px;transform-origin:0 0;top:603.12px;font-family:'Liberation Serif', serif;font-size:15.5px;line-height:15.5px;font-weight:400;font-style:normal;color:#111;-webkit-text-stroke:0.25px #111;">slowly and quietly, giving the film emotional weight without melodrama. Rick’s final choice is</div>
<div class="t" id="t64" style="left:327.10px;transform-origin:0 0;top:623.72px;font-family:'Liberation Serif', serif;font-size:15.5px;line-height:15.5px;font-weight:400;font-style:normal;color:#111;-webkit-text-stroke:0.25px #111;">not just about a love triangle but about choosing principles over personal happiness, a message</div>
<div class="t" id="t65" style="left:327.10px;transform-origin:0 0;top:644.12px;font-family:'Liberation Serif', serif;font-size:15.5px;line-height:15.5px;font-weight:400;font-style:normal;color:#111;-webkit-text-stroke:0.25px #111;">that resonated strongly with wartime audiences and still lands with force today.</div>
<div class="status"></div>
<div class="a" style="left:71.5px;top:657px;width:1px;height:28px;background:#e4e4e4"></div>
<div class="a" style="left:747.5px;top:657px;width:1px;height:28px;background:#e4e4e4"></div>
<div class="a" style="left:948.5px;top:657px;width:1px;height:28px;background:#e4e4e4"></div>
<div class="a" style="left:1000.5px;top:657px;width:1px;height:28px;background:#e4e4e4"></div>
<svg class="a" style="left:0;top:0;pointer-events:none" width="1200" height="685" viewBox="0 0 1200 685" fill="none"><path d="M83.2 665 H95 M83.2 669.6 H95" stroke="#555" stroke-width="1.2" stroke-linecap="round" stroke-linejoin="round" /><path d="M92.4 674.8 H95" stroke="#555" stroke-width="1.1" stroke-linecap="round" stroke-linejoin="round" /><path d="M882.2 670.6 L884.6 673 L887 670.6" stroke="#555" stroke-width="1.05" stroke-linecap="round" stroke-linejoin="round" /><circle cx="904" cy="671.5" r="7.4" stroke="#444" stroke-width="1.25"/><ellipse cx="904" cy="671.5" rx="3.4" ry="7.4" stroke="#444" stroke-width="1.15"/><path d="M897 669 H911 M897 674 H911" stroke="#444" stroke-width="1.15" stroke-linecap="round" stroke-linejoin="round" /><path d="M934.5 677.7 H925.4 Q924.6 677.7 924.6 676.9 V665.7 Q924.6 664.9 925.4 664.9 H936.9 Q937.7 664.9 937.7 665.7 V673.4" stroke="#444" stroke-width="1.2" stroke-linecap="round" stroke-linejoin="round" /><path d="M928.4 673.8 L931 667.6 L933.6 673.8 M929.3 671.6 H932.7" stroke="#444" stroke-width="1.05" stroke-linecap="round" stroke-linejoin="round" /><path d="M932.8 676.6 L935 678.9 L939.4 674.4" stroke="#6a86b8" stroke-width="1.2" stroke-linecap="round" stroke-linejoin="round" /><path d="M959.2 666.7 H963.3 M959.2 670 H966" stroke="#8a9fc4" stroke-width="1.2" stroke-linecap="round" stroke-linejoin="round" /><path d="M962.4 676.6 L962.9 674.2 L971.2 665.9 Q972.1 665 973 665.9 Q973.9 666.8 973 667.7 L964.8 676Z" stroke="#444" stroke-width="1.1" stroke-linecap="round" stroke-linejoin="round" /><path d="M983.6 670.8 L986 673.1 L988.4 670.8" stroke="#555" stroke-width="1.05" stroke-linecap="round" stroke-linejoin="round" /><path d="M1013.6 664.4 H1022.6 Q1023.6 664.4 1023.6 665.4 V677.6 Q1023.6 678.6 1022.6 678.6 H1013.6 Q1012.6 678.6 1012.6 677.6 V665.4 Q1012.6 664.4 1013.6 664.4Z" stroke="#444" stroke-width="1.25" stroke-linecap="round" stroke-linejoin="round" /><path d="M1014.6 668.2 V666.4 H1016.6 M1019.6 666.4 H1021.6 V668.2 M1021.6 674.6 V676.6 H1019.6 M1016.6 676.6 H1014.6 V674.6" stroke="#6d88b0" stroke-width="1.05" stroke-linecap="round" stroke-linejoin="round" /><path d="M1043.4 672.6 V665.4 Q1043.4 664.4 1044.4 664.4 H1053.4 Q1054.4 664.4 1054.4 665.4 V672.6" stroke="#444" stroke-width="1.25" stroke-linecap="round" stroke-linejoin="round" /><path d="M1042.6 676.8 H1047.6 M1044.4 675 L1042.6 676.8 L1044.4 678.6 M1050.2 676.8 H1055.4 M1053.6 675 L1055.4 676.8 L1053.6 678.6" stroke="#6d88b0" stroke-width="1.05" stroke-linecap="round" stroke-linejoin="round" /><path d="M1073.4 670.9 H1085.6" stroke="#666" stroke-width="1.3" stroke-linecap="round" stroke-linejoin="round" /><path d="M1174 671.2 H1186.2 M1180.1 665.1 V677.3" stroke="#555" stroke-width="1.3" stroke-linecap="round" stroke-linejoin="round" /></svg>
<div class="t s" id="t66" style="left:8.30px;transform-origin:0 0;top:665.64px;font-family:'Liberation Sans', sans-serif;font-size:12px;line-height:12px;font-weight:400;font-style:normal;color:#444;transform:scaleX(0.9236);">Page 1 of 2</div>
<div class="t" id="t67" style="left:83.20px;transform-origin:0 0;top:671.80px;font-family:'Liberation Sans', sans-serif;font-size:6.5px;line-height:6.5px;font-weight:700;font-style:normal;color:#4a6fa8;transform:scaleX(1.0229);">12</div>
<div class="t s" id="t68" style="left:105.00px;transform-origin:0 0;top:665.64px;font-family:'Liberation Sans', sans-serif;font-size:12px;line-height:12px;font-weight:400;font-style:normal;color:#444;transform:scaleX(0.9811);">Word count</div>
<div class="t s" id="t69" style="left:409.00px;transform-origin:0 0;top:665.64px;font-family:'Liberation Sans', sans-serif;font-size:12px;line-height:12px;font-weight:400;font-style:normal;color:#444;transform:scaleX(0.9342);">All changes saved</div>
<div class="t s" id="t70" style="left:756.90px;transform-origin:0 0;top:665.64px;font-family:'Liberation Sans', sans-serif;font-size:12px;line-height:12px;font-weight:400;font-style:normal;color:#444;transform:scaleX(0.9275);">English – United States</div>
<div class="t s" id="t71" style="left:1099.40px;transform-origin:0 0;top:666.24px;font-family:'Liberation Sans', sans-serif;font-size:12px;line-height:12px;font-weight:400;font-style:normal;color:#444;transform:scaleX(0.9459);">Zoom 100%</div>
<div class="dlg"></div>
<div class="a" style="left:414px;top:362px;width:306px;height:1px;background:#e8e8e8"></div>
<div class="a" style="left:414px;top:541px;width:306px;height:1px;background:#e8e8e8"></div>
<div class="t" id="t72" style="left:504.60px;transform-origin:0 0;top:341.32px;font-family:'Liberation Sans', sans-serif;font-size:12.5px;line-height:12.5px;font-weight:700;font-style:normal;color:#3a3a3a;transform:scaleX(0.9957);">Grammar suggestion</div>
<svg style="position:absolute;left:696px;top:340px;" width="13" height="13" viewBox="0 0 13 13" fill="none"><path d="M1.5 1.5L11.5 11.5M11.5 1.5L1.5 11.5" stroke="#a8a8a8" stroke-width="1.2"/></svg>
<div class="t" id="t73" style="left:430.20px;transform-origin:0 0;top:380.71px;font-family:'Liberation Sans', sans-serif;font-size:10.5px;line-height:10.5px;font-weight:700;font-style:normal;color:#3a3a3a;transform:scaleX(0.9791);">Suggested correction</div>
<div class="a" style="left:430px;top:399px;width:274px;height:38px;background:#f2f2f2;border-radius:3px"></div>
<div class="t s" id="t74" style="left:441.00px;transform-origin:0 0;top:413.24px;font-family:'Liberation Sans', sans-serif;font-size:12px;line-height:12px;font-weight:400;font-style:normal;color:#3c3c3c;transform:scaleX(0.9492);">stands one of</div>
<svg class="a" style="left:0;top:0;pointer-events:none" width="1200" height="685" viewBox="0 0 1200 685" fill="none"><path d="M519.2 419.6 H526.2 M524.2 417.8 L526.4 419.6 L524.2 421.4" stroke="#444" stroke-width="1.1" stroke-linecap="round" stroke-linejoin="round" /></svg>
<div class="t s" id="t75" style="left:535.80px;transform-origin:0 0;top:413.24px;font-family:'Liberation Sans', sans-serif;font-size:12px;line-height:12px;font-weight:400;font-style:normal;color:#3c3c3c;transform:scaleX(0.9022);">stands</div>
<div class="t" id="t76" style="left:571.80px;transform-origin:0 0;top:413.24px;font-family:'Liberation Sans', sans-serif;font-size:12px;line-height:12px;font-weight:700;font-style:normal;color:#d2372c;transform:scaleX(0.8234);">as</div>
<div class="t s" id="t77" style="left:586.10px;transform-origin:0 0;top:413.24px;font-family:'Liberation Sans', sans-serif;font-size:12px;line-height:12px;font-weight:400;font-style:normal;color:#3c3c3c;transform:scaleX(0.9918);">one of</div>
<div class="t" id="t78" style="left:430.20px;transform-origin:0 0;top:451.61px;font-family:'Liberation Sans', sans-serif;font-size:10.5px;line-height:10.5px;font-weight:700;font-style:normal;color:#3a3a3a;transform:scaleX(0.9846);">Explanation</div>
<div class="a" style="left:430px;top:470px;width:274px;height:55px;background:#f2f2f2;border-radius:3px"></div>
<div class="t s" id="t79" style="left:440.70px;transform-origin:0 0;top:483.44px;font-family:'Liberation Sans', sans-serif;font-size:12px;line-height:12px;font-weight:400;font-style:normal;color:#3c3c3c;transform:scaleX(0.9809);">Missing preposition 'as' for the idiomatic</div>
<div class="t s" id="t80" style="left:440.70px;transform-origin:0 0;top:500.84px;font-family:'Liberation Sans', sans-serif;font-size:12px;line-height:12px;font-weight:400;font-style:normal;color:#3c3c3c;transform:scaleX(0.9337);">expression 'stands as one of'</div>
<div class="a" style="left:479.5px;top:555.5px;width:82.5px;height:22.5px;background:#4a7fdc;border-radius:3px"></div>
<div class="t" id="t81" style="left:501.70px;transform-origin:0 0;top:561.34px;font-family:'Liberation Sans', sans-serif;font-size:12px;line-height:12px;font-weight:700;font-style:normal;color:#fff;transform:scaleX(0.9321);">Accept</div>
<div class="a" style="left:572.5px;top:555.5px;width:82px;height:22.5px;background:#fff;border:1px solid #d6d6d6;box-sizing:border-box;border-radius:3px"></div>
<div class="t" id="t82" style="left:597.20px;transform-origin:0 0;top:561.34px;font-family:'Liberation Sans', sans-serif;font-size:12px;line-height:12px;font-weight:700;font-style:normal;color:#333;transform:scaleX(0.9103);">Reject</div>
</body></html>
